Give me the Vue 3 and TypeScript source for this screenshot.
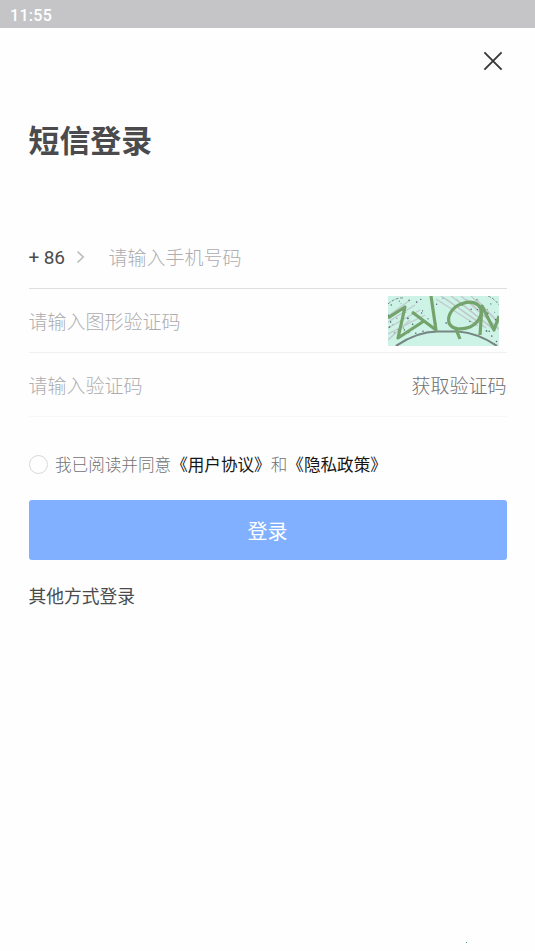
<script setup lang="ts">
import { computed, ref } from 'vue'

const phone = ref('')
const imageCode = ref('')
const smsCode = ref('')
const agreed = ref(false)

// Speckles scattered over the captcha background
const specks = computed(() => {
  const out: { x: number; y: number; r: number; c: string }[] = []
  let seed = 41
  const next = () => (seed = (seed * 16807) % 2147483647) / 2147483647
  const tones = ['#334b62', '#526b68', '#6c5279', '#3f7867']
  for (let i = 0; i < 58; i++) {
    const x = next() * 111
    const y = next() * 49
    if (Math.pow((x - 60) / 46, 2) + Math.pow((y - 58) / 22, 2) < 1) continue
    out.push({ x, y, r: 0.4 + next() * 0.45, c: tones[i % 4] })
  }
  return out
})
const hatches = Array.from({ length: 9 }, (_, i) => i)
</script>

<template>
  <div class="screen">
    <header class="status"><span>11:55</span></header>
    <nav class="nav">
      <button class="close" aria-label="关闭">
        <svg width="20" height="20" viewBox="0 0 20 20">
          <path d="M1.4 1.4 18.6 18.6M18.6 1.4 1.4 18.6" fill="none" stroke="#38383a" stroke-width="1.9" />
        </svg>
      </button>
    </nav>
    <main class="content">
      <h1 class="title">短信登录</h1>
      <form class="form" @submit.prevent>
        <div class="row first">
          <span class="code">+ 86</span>
          <svg class="arrow" width="9" height="14" viewBox="0 0 9 14">
            <path d="M1.5 1.5 7.2 7 1.5 12.5" fill="none" stroke="#bdbdbf" stroke-width="1.7" />
          </svg>
          <input v-model="phone" class="field" placeholder="请输入手机号码" />
        </div>
        <div class="row second">
          <input v-model="imageCode" class="field" placeholder="请输入图形验证码" />
          <svg class="captcha" width="111" height="50" viewBox="0 0 111 50">
            <rect width="111" height="50" fill="#cdf3e6" />
            <g fill="none" stroke="#b9adbc" stroke-width="1.3" opacity="0.6">
              <path v-for="i in hatches" :key="i" :d="`M${48 + i * 5} ${i % 2 ? 0 : 3}l${42 - i} ${27 + i}`" />
              <path v-for="i in hatches.slice(0, 5)" :key="'l' + i" :d="`M0 ${20 + i * 6}L${22 + (i % 4) * 5} ${i * 5 + 4}`" />
            </g>
            <g fill="none" stroke="#7f8790" stroke-width="1" stroke-dasharray="3 1.5">
              <path d="M0 8Q8 1 16 2M100 0Q107 3 111 9" />
            </g>
            <circle v-for="(s, i) in specks" :key="'s' + i" :cx="s.x" :cy="s.y" :r="s.r" :fill="s.c" />
            <path d="M8 50Q28 36 49 35.5H70Q90 37 109 50" fill="none" stroke="#708b80" stroke-width="2.2" />
            <path d="M8 50Q28 36 49 35.5H70Q90 37 109 50" fill="none" stroke="#8d798d" stroke-width="1" stroke-dasharray="4 4" />
            <g fill="none" stroke="#75a36c" stroke-width="3.2" stroke-linejoin="round">
              <path d="M0 22 17 11 10 42 36 25" />
              <path d="M24 16 48 34 43 0" />
              <path d="M73 8C65 11 59 19 61 27C64 34 74 34 82 31C92 26 97 15 90 9C85 5 78 6 73 8ZM67 31 72 43" />
              <path d="M92 39 94 10 106 34 111 20" />
            </g>
          </svg>
        </div>
        <div class="row third">
          <input v-model="smsCode" class="field" placeholder="请输入验证码" />
          <button type="button" class="send">获取验证码</button>
        </div>
        <label class="agreement">
          <input v-model="agreed" class="radio" type="checkbox" />
          <span class="terms">我已阅读并同意<b>《用户协议》</b>和<b>《隐私政策》</b></span>
        </label>
        <button class="login">登录</button>
      </form>
      <a class="other">其他方式登录</a>
    </main>
    <footer class="foot"><i class="dot"></i></footer>
  </div>
</template>

<style>
body {
  margin: 0;
  background: #fefefe;
}
</style>

<style scoped>
.screen {
  display: flex;
  flex-direction: column;
  box-sizing: border-box;
  height: 951px;
  background: #fefefe;
  font-family: Roboto, "Noto Sans CJK SC", sans-serif;
  color: #4b4b4d;
}
.screen * {
  box-sizing: border-box;
}
button,
input {
  font-family: inherit;
  border: 0;
  padding: 0;
  background: none;
}
.status {
  height: 28px;
  padding: 3px 10px 0;
  background: #c5c5c7;
  color: #fff;
  font-size: 16px;
  font-weight: 500;
  line-height: 25px;
  letter-spacing: 0.3px;
}
.nav {
  display: flex;
  justify-content: flex-end;
  padding: 23px 32px 0 0;
}
.close {
  display: flex;
}
.content {
  padding: 48px 28.5px 0;
}
.title {
  margin: 0;
  height: 46px;
  font-size: 30.9px;
  font-weight: 700;
  line-height: 46px;
}
.form {
  padding-top: 60px;
}
.row {
  display: flex;
  align-items: center;
  height: 64px;
  border-bottom: 1px solid #f0f0f0;
}
.first {
  border-color: #dedede;
}
.third {
  border-color: #f7f7f7;
}
.code {
  width: 47.5px;
  padding-top: 2px;
  font-size: 19px;
  letter-spacing: -0.1px;
}
.arrow {
  margin-right: 23.5px;
}
.field {
  flex: 1;
  min-width: 0;
  height: 30px;
  padding-top: 3px;
  font-size: 19px;
  font-weight: 300;
  outline: none;
}
.field::placeholder {
  color: #adadaf;
  opacity: 1;
}
.captcha {
  margin-right: 7.5px;
}
.send {
  color: #6f6f71;
  font-size: 19px;
  font-weight: 300;
}
.agreement {
  display: flex;
  align-items: center;
  height: 24px;
  margin-top: 36px;
  font-size: 16.6px;
  font-weight: 300;
  line-height: 24px;
  color: #727274;
  white-space: nowrap;
}
.terms {
  padding-top: 2px;
}
.agreement b {
  font-weight: 400;
  color: #161616;
}
.radio {
  appearance: none;
  width: 19px;
  height: 19px;
  margin: 0 7.5px 1px 0;
  border: 1px solid #d8d8d8;
  border-radius: 50%;
}
.login {
  display: block;
  width: 100%;
  height: 60px;
  margin-top: 23px;
  border-radius: 3px;
  background: #80b0ff;
  color: #fff;
  font-size: 20px;
}
.other {
  display: block;
  margin-top: 23.5px;
  font-size: 17.75px;
  line-height: 26px;
}
.foot {
  display: flex;
  justify-content: flex-end;
  margin-top: auto;
  padding: 0 68px 8px 0;
}
.dot {
  width: 1px;
  height: 1px;
  background: #4f9b9b;
}
</style>
